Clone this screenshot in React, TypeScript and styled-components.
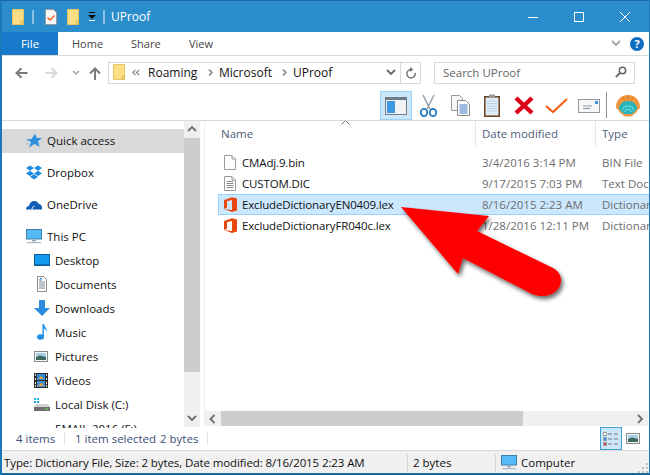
import React from "react";
import styled, { createGlobalStyle } from "styled-components";

const Global = createGlobalStyle`
  html, body { margin: 0; padding: 0; background: #fff; }
  #root { width: 650px; height: 475px; overflow: hidden; }
  * { box-sizing: border-box; }
`;

const Window = styled.div`
  position: relative;
  width: 650px;
  height: 475px;
  display: flex;
  flex-direction: column;
  background: #fff;
  border-left: 2px solid #1c79b8;
  border-right: 1px solid #1c79b8;
  border-top: 1px solid #17699f;
  border-bottom: 2px solid #17699f;
  font-family: "Open Sans", "Noto Sans", sans-serif;
  font-size: 11.5px;
  color: #111;
  overflow: hidden;
`;

const TitleBar = styled.div`
  height: 31px;
  flex: none;
  background: #2b8dcb;
  display: flex;
  align-items: center;
  color: #fff;
  padding-left: 10px;
`;
const QuickIcons = styled.div`
  display: flex;
  align-items: center;
  width: 99px;
`;
const TitleSep = styled.span<{ $l: number; $r: number }>`
  width: 2px;
  height: 14px;
  background: #8cc0e2;
  margin: 0 ${(p) => p.$r}px 0 ${(p) => p.$l}px;
`;
const TitleText = styled.span`
  font-size: 12px;
  flex: 1;
`;
const WindowControls = styled.div`
  display: flex;
  align-items: center;
  gap: 36px;
  margin-right: 19px;
`;

const Tabs = styled.div`
  height: 24px;
  flex: none;
  display: flex;
  align-items: stretch;
  border-bottom: 1px solid #dadada;
`;
const FileTab = styled.div`
  width: 56px;
  background: #1979ca;
  color: #fff;
  display: flex;
  align-items: center;
  justify-content: center;
  font-size: 11.5px;
  flex: none;
`;
const Tab = styled.div<{ $w: number; $pl: number }>`
  width: ${(p) => p.$w}px;
  padding-left: ${(p) => p.$pl}px;
  color: #444;
  display: flex;
  align-items: center;
  font-size: 11px;
  flex: none;
`;
const RibbonTools = styled.div`
  margin-left: auto;
  margin-right: 5px;
  display: flex;
  align-items: center;
  gap: 9px;
`;

const AddressRow = styled.div`
  height: 29px;
  flex: none;
  display: flex;
  align-items: flex-start;
  padding-top: 6px;
`;
const NavButtons = styled.div`
  width: 106px;
  height: 22px;
  display: flex;
  align-items: center;
  padding-left: 13px;
  flex: none;
`;
const NavSlot = styled.span<{ $w: number }>`
  width: ${(p) => p.$w}px;
  display: flex;
  align-items: center;
  flex: none;
`;
const AddressBox = styled.div`
  width: 313px;
  height: 22px;
  flex: none;
  border: 1px solid #d9d9d9;
  display: flex;
  align-items: center;
  padding: 0 0 2px 4px;
  font-size: 12px;
`;
const Crumb = styled.span<{ $w: number }>`
  width: ${(p) => p.$w}px;
  flex: none;
`;
const CrumbArrow = styled.span<{ $w: number }>`
  width: ${(p) => p.$w}px;
  flex: none;
  display: flex;
  justify-content: center;
`;
const AddressEnd = styled.div`
  margin-left: auto;
  height: 20px;
  margin-bottom: -2px;
  display: flex;
  align-items: center;
`;
const RefreshCell = styled.div`
  width: 20px;
  height: 100%;
  margin-left: 4px;
  border-left: 1px solid #d9d9d9;
  display: flex;
  align-items: center;
  justify-content: center;
`;
const SearchBox = styled.div`
  width: 201px;
  height: 22px;
  margin-left: 13px;
  flex: none;
  border: 1px solid #d9d9d9;
  display: flex;
  align-items: center;
  justify-content: space-between;
  padding: 0 7px 2px 8px;
  color: #666;
  font-size: 11.5px;
`;

const CommandRow = styled.div`
  height: 36px;
  flex: none;
  display: flex;
  align-items: flex-end;
  padding-left: 378px;
  border-bottom: 1px solid #d9d9d9;
`;
const ToggleButton = styled.div`
  width: 32px;
  height: 29px;
  background: #cce6fa;
  border: 1px solid #99d1f7;
  display: flex;
  align-items: center;
  justify-content: center;
  flex: none;
`;
const CommandIcon = styled.div<{ $w: number; $ml: number }>`
  width: ${(p) => p.$w}px;
  margin-left: ${(p) => p.$ml}px;
  height: 29px;
  display: flex;
  align-items: center;
  justify-content: center;
  flex: none;
`;
const CommandSep = styled.span`
  width: 1px;
  height: 26px;
  background: #8f8f8f;
  margin: 0 9px 2px 6px;
  flex: none;
`;

const Body = styled.div`
  height: 307px;
  flex: none;
  display: flex;
  overflow: hidden;
`;
const NavPane = styled.div`
  width: 182px;
  flex: none;
  padding-top: 8px;
  overflow: hidden;
`;
const NavGroup = styled.div`
  margin-bottom: 8px;
`;
const NavRow = styled.div<{ $active?: boolean; $indent?: boolean }>`
  height: 24px;
  display: flex;
  align-items: center;
  background: ${(p) => (p.$active ? "#d9d9d9" : "transparent")};
  padding: 0 0 2px ${(p) => (p.$indent ? "32px" : "24px")};
  font-size: 11.5px;
  color: #111;
`;
const NavIcon = styled.span<{ $w: number }>`
  width: ${(p) => p.$w}px;
  flex: none;
  display: flex;
  align-items: center;
`;
const VScroll = styled.div`
  width: 16px;
  flex: none;
  background: #f0f0f0;
  display: flex;
  flex-direction: column;
  align-items: stretch;
  height: 306px;
`;
const ScrollArrow = styled.div<{ $w?: number }>`
  flex: none;
  display: flex;
  align-items: center;
  justify-content: center;
  height: ${(p) => (p.$w ? "auto" : "17px")};
  width: ${(p) => (p.$w ? p.$w + "px" : "auto")};
`;
const VThumb = styled.div`
  height: 234px;
  background: #cdcdcd;
  flex: none;
`;
const Grow = styled.div`
  flex: 1;
`;
const FileArea = styled.div`
  flex: 1;
  min-width: 0;
  display: flex;
  flex-direction: column;
  margin-left: 4px;
  border-left: 1px solid #f0f0f0;
  height: 306px;
  position: relative;
`;
const HeaderRow = styled.div`
  height: 25px;
  flex: none;
  display: flex;
  color: #4c607a;
  font-size: 11.5px;
  margin-bottom: 6px;
`;
const HeaderCell = styled.div<{ $w: number; $pl: number; $sep?: boolean }>`
  width: ${(p) => p.$w}px;
  flex: none;
  padding-left: ${(p) => p.$pl}px;
  padding-top: 5px;
  border-right: ${(p) => (p.$sep ? "1px solid #e5e5e5" : "none")};
  white-space: nowrap;
`;
const SortCaret = styled.svg`
  position: absolute;
  left: 136px;
  top: -1px;
`;
const FileList = styled.div`
  flex: 1;
  padding-left: 13px;
  overflow: hidden;
`;
const FileRow = styled.div<{ $selected?: boolean }>`
  height: 21px;
  display: flex;
  align-items: center;
  background: ${(p) => (p.$selected ? "#cce8ff" : "transparent")};
  border: 1px solid ${(p) => (p.$selected ? "#99d1ff" : "transparent")};
  border-right: none;
  padding-left: 5px;
  white-space: nowrap;
  font-size: 11.5px;
`;
const FileIcon = styled.span`
  width: 18px;
  flex: none;
  display: flex;
  align-items: center;
`;
const FileName = styled.span`
  width: 240px;
  flex: none;
  color: #111;
  letter-spacing: -0.15px;
`;
const FileDate = styled.span`
  width: 120px;
  flex: none;
  color: #6d6d6d;
`;
const FileType = styled.span`
  color: #6d6d6d;
`;
const HScroll = styled.div`
  height: 15px;
  flex: none;
  background: #f0f0f0;
  display: flex;
  margin-bottom: 1px;
  margin-right: 1px;
`;
const HThumb = styled.div`
  width: 302px;
  background: #cdcdcd;
  flex: none;
`;

const StatusTop = styled.div`
  height: 23px;
  flex: none;
  display: flex;
  align-items: center;
  color: #3c4f78;
  font-size: 11.5px;
  border-bottom: 1px solid #d9d9d9;
  padding: 0 0 1px 14px;
`;
const StatusItem = styled.span<{ $w: number }>`
  width: ${(p) => p.$w}px;
  flex: none;
  white-space: nowrap;
`;
const StatusDivider = styled.span<{ $mr: number }>`
  width: 1px;
  height: 13px;
  background: #e5e5e5;
  margin-right: ${(p) => p.$mr}px;
  flex: none;
`;
const ViewButtons = styled.div`
  margin-left: auto;
  margin-right: 9px;
  display: flex;
  align-items: center;
  gap: 4px;
`;
const ViewButton = styled.div<{ $active?: boolean }>`
  width: ${(p) => (p.$active ? "22px" : "14px")};
  height: 23px;
  display: flex;
  align-items: center;
  justify-content: center;
  background: ${(p) => (p.$active ? "#cce6fa" : "transparent")};
  border: ${(p) => (p.$active ? "1px solid #3fa0d8" : "none")};
`;
const StatusBottom = styled.div`
  flex: 1;
  background: #f0f0f0;
  display: flex;
  align-items: center;
  position: relative;
  font-size: 11.5px;
  color: #111;
  padding-left: 2px;
`;
const StatusCell = styled.div<{ $w: number; $pl: number; $sep?: boolean; $tight?: boolean }>`
  width: ${(p) => p.$w}px;
  flex: none;
  height: 17px;
  display: flex;
  align-items: center;
  gap: 4px;
  padding-left: ${(p) => p.$pl}px;
  border-right: ${(p) => (p.$sep ? "1px solid #d4d4d4" : "none")};
  letter-spacing: ${(p) => (p.$tight ? "-0.1px" : "0")};
  white-space: nowrap;
`;
const Grip = styled.svg`
  position: absolute;
  right: 0;
  bottom: 0;
`;
const ArrowOverlay = styled.svg`
  position: absolute;
  left: -2px;
  top: -1px;
  pointer-events: none;
`;

const Folder = ({ w = 12, h = 16 }: { w?: number; h?: number }) => (
  <svg width={w} height={h} viewBox="0 0 12 16">
    <path d="M.5.5h11v15H.5z" fill="#fbde85" stroke="#e9c561" />
    <path d="M9 12h2.5v3.5H9z" fill="#f3cf6c" stroke="#d9b24c" strokeWidth=".6" />
  </svg>
);

const Office = () => (
  <svg width="13" height="15" viewBox="0 0 13 15">
    <path d="M0 3 8 .2 13 1.5v12L8 15 0 12l8 1V3L3 4.2v6.6L0 12z" fill="#e8470f" />
  </svg>
);

const Monitor = ({ w = 16, h = 15 }: { w?: number; h?: number }) => (
  <svg width={w} height={h} viewBox="0 0 16 15">
    <rect x=".5" y=".5" width="15" height="9.5" fill="#55bbf7" stroke="#3c7fa8" />
    <path d="M6 11h4v1.4H6z" fill="#8fa6b5" />
    <path d="M1 13h14v1.2H1z" fill="#a9bac6" />
  </svg>
);

const Landscape = () => (
  <svg width="14" height="11" viewBox="0 0 14 11">
    <rect x=".5" y=".5" width="13" height="10" fill="#f4f7f9" stroke="#8a8a8a" />
    <rect x="2" y="2" width="10" height="4" fill="#a8cfe6" />
    <path d="M2 6l4-1.5 6 1.5v3H2z" fill="#3f6b5e" />
  </svg>
);

const Chevron = ({ dir, color = "#6d6d6d" }: { dir: "up" | "down" | "left" | "right"; color?: string }) => {
  const d = { up: "M1 6l4-4 4 4", down: "M1 2l4 4 4-4", left: "M6.5 1l-4 4 4 4", right: "M3 1l4 4-4 4" }[dir];
  return (
    <svg width="10" height="10" viewBox="0 0 10 10" style={{ display: "block" }}>
      <path d={d} fill="none" stroke={color} strokeWidth="1.8" />
    </svg>
  );
};

const NavArrow = ({ flip, color }: { flip?: boolean; color: string }) => (
  <svg width="13" height="12" viewBox="0 0 13 12" style={flip ? { transform: "scaleX(-1)" } : undefined}>
    <path d="M12.5 6H2M6.5 1.2 1.5 6l5 4.8" fill="none" stroke={color} strokeWidth="2" />
  </svg>
);

const navTop = [
  {
    label: "Dropbox",
    icon: (
      <svg width="16" height="15" viewBox="0 0 16 15">
        <path d="M4 .5 8 3 4 5.7 0 3zM12 .5 16 3l-4 2.700L8 3zM4 5.700 8 8.400 4 11 0 8.400zM12 5.700l4 2.700L12 11 8 8.400zM4 11.800 8 9.200l4 2.600L8 14.500z" fill="#1f8be0" />
      </svg>
    ),
  },
  {
    label: "OneDrive",
    icon: (
      <svg width="16" height="11" viewBox="0 0 16 11">
        <path d="M0 10.500C0 8 1.500 7 3 7c.5-3 2.500-5 5-5s4 1 4.800 3C14.800 5 16 7 16 8.500v2z" fill="#0f5db5" />
        <path d="M6 10.500c0-2 1-3 2.600-3.300" fill="none" stroke="#fff" strokeWidth="1" />
      </svg>
    ),
  },
];

const pcItems: { label: string; icon: React.ReactNode }[] = [
  {
    label: "Desktop",
    icon: (
      <svg width="16" height="12" viewBox="0 0 16 12">
        <rect x=".5" y=".5" width="15" height="11" fill="#149bee" stroke="#0d5f96" />
        <path d="M1 10h14v1H1z" fill="#0b6fb4" />
      </svg>
    ),
  },
  {
    label: "Documents",
    icon: (
      <svg width="16" height="16" viewBox="0 0 16 16">
        <path d="M3.500.5h6l3 3v12h-9z" fill="#fff" stroke="#8d8d8d" />
        <path d="M5 6h6M5 8h6M5 10h6M5 12h6" stroke="#7d8c96" />
        <path d="M6 2.500h2M5 4h3" stroke="#2c8ee0" />
      </svg>
    ),
  },
  {
    label: "Downloads",
    icon: (
      <svg width="16" height="16" viewBox="0 0 16 16">
        <path d="M5 0h6v8h5l-8 8-8-8h5z" fill="#2c8ce0" />
      </svg>
    ),
  },
  {
    label: "Music",
    icon: (
      <svg width="16" height="16" viewBox="0 0 16 16">
        <ellipse cx="6.500" cy="13" rx="3.500" ry="2.700" fill="#1f8ee6" />
        <path d="M8.500 13V0h1.400c.5 3 3.600 4 2.800 8-.5-2-2-3.200-2.800-3.400V13z" fill="#1f8ee6" />
      </svg>
    ),
  },
  { label: "Pictures", icon: <Landscape /> },
  {
    label: "Videos",
    icon: (
      <svg width="14" height="15" viewBox="0 0 14 15">
        <rect width="14" height="15" fill="#2d2d2d" />
        <path d="M3 1h8v6H3z" fill="#2c8ce0" />
        <path d="M3 8h8v6H3z" fill="#4a90d0" />
        <path d="M4 6l3-3 3 3zM4 13l3-3 3 3z" fill="#e3a13a" />
        <path d="M1 1h1v2H1zM1 5h1v2H1zM1 9h1v2H1zM1 12h1v2H1zM12 1h1v2h-1zM12 5h1v2h-1zM12 9h1v2h-1zM12 12h1v2h-1z" fill="#ddd" />
      </svg>
    ),
  },
  {
    label: "Local Disk (C:)",
    icon: (
      <svg width="16" height="14" viewBox="0 0 16 14">
        <path d="M0 1h2v2H0zM3 1h2v2H3zM0 4h2v2H0zM3 4h2v2H3z" fill="#18b4ee" />
        <path d="M2 7h12l2 3v4H0v-4z" fill="#d2d2d2" />
        <path d="M0 10h16v4H0z" fill="#6f6f6f" />
        <path d="M11 11.500h3v1.200h-3z" fill="#6fd34f" />
      </svg>
    ),
  },
  {
    label: "EMAIL-2016 (F:)",
    icon: (
      <svg width="16" height="14" viewBox="0 0 16 14">
        <path d="M0 8h16v6H0z" fill="#8a8a8a" />
      </svg>
    ),
  },
];

const files = [
  { name: "CMAdj.9.bin", date: "3/4/2016 3:14 PM", type: "BIN File", kind: "blank" },
  { name: "CUSTOM.DIC", date: "9/17/2015 7:03 PM", type: "Text Document", kind: "text" },
  { name: "ExcludeDictionaryEN0409.lex", date: "8/16/2015 2:23 AM", type: "Dictionary File", kind: "office", selected: true },
  { name: "ExcludeDictionaryFR040c.lex", date: "1/28/2016 12:11 PM", type: "Dictionary File", kind: "office" },
];

const FileGlyph = ({ kind }: { kind: string }) => {
  if (kind === "office") return <Office />;
  return (
    <svg width="12" height="15" viewBox="0 0 12 15">
      <path d="M.5.500h7.500l3.500 3.500v10.500H.5z" fill="#fff" stroke="#9b9b9b" />
      <path d="M8 .5V4h3.500" fill="#eee" stroke="#9b9b9b" />
      {kind === "text" && <path d="M2.500 5.500h7M2.500 7.500h7M2.500 9.500h7M2.500 11.500h7" stroke="#8a8a8a" />}
    </svg>
  );
};

export default function App() {
  return (
    <Window>
      <Global />
      <TitleBar>
        <QuickIcons>
          <Folder />
          <TitleSep $l={8} $r={11} />
          <svg width="12" height="16" viewBox="0 0 12 16">
            <path d="M.5.500h8l3 3v12H.5z" fill="#f7f7f7" stroke="#9a9a9a" />
            <path d="M2.500 8.500l2.500 2.500 4.500-4.500" fill="none" stroke="#e8591a" strokeWidth="1.400" />
          </svg>
          <span style={{ width: 10 }} />
          <Folder />
          <svg width="9" height="9" viewBox="0 0 9 9" style={{ marginLeft: 9 }}>
            <path d="M1 0h6v1H1zM0 3h8L4 7z" fill="#111" />
            <path d="M1 8h6v1H1z" fill="#fff" />
          </svg>
          <TitleSep $l={6} $r={0} />
        </QuickIcons>
        <TitleText>UProof</TitleText>
        <WindowControls>
          <svg width="10" height="10" viewBox="0 0 10 10">
            <path d="M0 5.500h10" stroke="#fff" />
          </svg>
          <svg width="10" height="10" viewBox="0 0 10 10">
            <rect x=".5" y=".5" width="9" height="9" fill="none" stroke="#fff" />
          </svg>
          <svg width="10" height="10" viewBox="0 0 10 10">
            <path d="M0 0l10 10M10 0 0 10" stroke="#fff" />
          </svg>
        </WindowControls>
      </TitleBar>

      <Tabs>
        <FileTab>File</FileTab>
        <Tab $w={59} $pl={14}>Home</Tab>
        <Tab $w={58} $pl={14}>Share</Tab>
        <Tab $w={60} $pl={14}>View</Tab>
        <RibbonTools>
          <Chevron dir="down" color="#a5a5a5" />
          <svg width="14" height="14" viewBox="0 0 14 14">
            <circle cx="7" cy="7" r="7" fill="#0f6cc2" />
            <text x="7" y="11" textAnchor="middle" fontSize="11" fontWeight="700" fill="#fff" fontFamily="Open Sans">?</text>
          </svg>
        </RibbonTools>
      </Tabs>

      <AddressRow>
        <NavButtons>
          <NavSlot $w={30}><NavArrow color="#7b7b7b" /></NavSlot>
          <NavSlot $w={27}><NavArrow flip color="#d7d7d7" /></NavSlot>
          <NavSlot $w={17}>
            <svg width="8" height="6" viewBox="0 0 8 6"><path d="M1 1l3 3 3-3" fill="none" stroke="#a5a5a5" strokeWidth="1.500" /></svg>
          </NavSlot>
          <NavSlot $w={13}>
            <svg width="12" height="13" viewBox="0 0 12 13"><path d="M6 13V2M1 6.500 6 1.500l5 5" fill="none" stroke="#7b7b7b" strokeWidth="2" /></svg>
          </NavSlot>
        </NavButtons>
        <AddressBox>
          <NavSlot $w={19}><Folder /></NavSlot>
          <NavSlot $w={16}>
            <svg width="8" height="7" viewBox="0 0 8 7"><path d="M3.500.8.800 3.500l2.700 2.700M7.200.8 4.500 3.500l2.700 2.700" fill="none" stroke="#808080" strokeWidth="1.100" /></svg>
          </NavSlot>
          <Crumb $w={54}>Roaming</Crumb>
          <CrumbArrow $w={17}><svg width="5" height="7" viewBox="0 0 5 7"><path d="M1 .5 4 3.500 1 6.500" fill="none" stroke="#777" strokeWidth="1.300" /></svg></CrumbArrow>
          <Crumb $w={57}>Microsoft</Crumb>
          <CrumbArrow $w={17}><svg width="5" height="7" viewBox="0 0 5 7"><path d="M1 .5 4 3.500 1 6.500" fill="none" stroke="#777" strokeWidth="1.300" /></svg></CrumbArrow>
          <Crumb $w={50}>UProof</Crumb>
          <AddressEnd>
            <Chevron dir="down" color="#666" />
            <RefreshCell>
              <svg width="11" height="12" viewBox="0 0 11 12">
                <path d="M6.500 2.500a4.200 4.200 0 1 0 3.700 3.500" fill="none" stroke="#777" strokeWidth="1.500" />
                <path d="M5 0l3.500 2.500L5 5z" fill="#777" />
              </svg>
            </RefreshCell>
          </AddressEnd>
        </AddressBox>
        <SearchBox>
          Search UProof
          <svg width="12" height="12" viewBox="0 0 12 12">
            <circle cx="7.500" cy="4.500" r="3.200" fill="none" stroke="#666" strokeWidth="1.500" />
            <path d="M5 7 .8 11.200" stroke="#666" strokeWidth="1.800" />
          </svg>
        </SearchBox>
      </AddressRow>

      <CommandRow>
        <ToggleButton>
          <svg width="22" height="18" viewBox="0 0 22 18">
            <rect x=".5" y=".5" width="21" height="17" fill="#f2f2f2" stroke="#6e7c88" />
            <rect x="1" y="1" width="20" height="2" fill="#6e7c88" />
            <rect x="2" y="4" width="8" height="12" fill="#3f97e0" />
          </svg>
        </ToggleButton>
        <CommandIcon $w={17} $ml={8}>
          <svg width="17" height="23" viewBox="0 0 17 23">
            <path d="M3 1l7 14M14 1 7 15" stroke="#9aa4ac" strokeWidth="1.600" />
            <ellipse cx="4" cy="18.500" rx="3.200" ry="3.600" fill="none" stroke="#1f7cc4" strokeWidth="1.800" />
            <ellipse cx="13" cy="18.500" rx="3.200" ry="3.600" fill="none" stroke="#1f7cc4" strokeWidth="1.800" />
          </svg>
        </CommandIcon>
        <CommandIcon $w={19} $ml={14}>
          <svg width="19" height="21" viewBox="0 0 19 21">
            <path d="M.5.500h8l3 3v12H.5z" fill="#f7f7f7" stroke="#9a9a9a" />
            <path d="M6.500 5.500h8l4 4v11h-12z" fill="#fff" stroke="#8a8a8a" />
            <path d="M8.500 10h8M8.500 12h8M8.500 14h8M8.500 16h8M8.500 18h8" stroke="#3a78c8" />
          </svg>
        </CommandIcon>
        <CommandIcon $w={16} $ml={14}>
          <svg width="16" height="23" viewBox="0 0 16 23">
            <rect x=".8" y="2.800" width="14.400" height="19.400" fill="#e2eef7" stroke="#6b4a2c" strokeWidth="1.600" />
            <path d="M5 .5h6v3.500H5z" fill="#9a9a9a" />
            <path d="M3 7h10M3 9.500h10M3 12h10M3 14.500h10M3 17h10" stroke="#b9d2e6" />
          </svg>
        </CommandIcon>
        <CommandIcon $w={20} $ml={14}>
          <svg width="20" height="19" viewBox="0 0 20 19">
            <path d="M2 2l16 15M18 2 2 17" stroke="#dc0014" strokeWidth="4.400" />
          </svg>
        </CommandIcon>
        <CommandIcon $w={23} $ml={11}>
          <svg width="23" height="16" viewBox="0 0 23 16">
            <path d="M1 8l7 6L22 1" fill="none" stroke="#f0601a" strokeWidth="2.200" />
          </svg>
        </CommandIcon>
        <CommandIcon $w={23} $ml={9}>
          <svg width="22" height="14" viewBox="0 0 22 14">
            <rect x=".5" y=".5" width="21" height="13" fill="#f7f7f7" stroke="#8f9aa4" />
            <rect x="17" y="2" width="3" height="3" fill="#3b94e6" />
            <path d="M5 7h9M5 9.500h7" stroke="#8f9aa4" />
          </svg>
        </CommandIcon>
        <CommandSep />
        <CommandIcon $w={24} $ml={0}>
          <svg width="24" height="22" viewBox="0 0 24 22">
            <path d="M12 0C5 0 0 5 0 12c0 2 2 2 3 4 1 3 3 2 4 4 1 2 9 2 10 0 1-2 3-1 4-4 1-2 3-2 3-4C24 5 19 0 12 0z" fill="#f0963c" />
            <path d="M12 6C7 6 3 9 3 14c2 2 4 4 5 5h8c1-1 3-3 5-5 0-5-4-8-9-8z" fill="#27b4bd" />
            <path d="M6.500 15.500c0-6 11-6 11 0M9 17c0-3.500 6-3.500 6 0" fill="none" stroke="#5fd6cf" strokeWidth="1.300" />
            <path d="M7 1.500 8.500 6M12 0v5.500M17 1.500 15.500 6" stroke="#d9772a" />
          </svg>
        </CommandIcon>
      </CommandRow>

      <Body>
        <NavPane>
          <NavGroup>
            <NavRow $active>
              <NavIcon $w={21}>
                <svg width="16" height="15" viewBox="0 0 16 15">
                  <path d="M9 .5l1.700 4.500H16l-4 3.300 1.500 5.500L8.500 11 3 14.500l2-5.500L.5 6l5 .2z" fill="#2c8fdf" />
                  <path d="M0 8h3M0 11h3" stroke="#8cc4ee" />
                </svg>
              </NavIcon>
              Quick access
            </NavRow>
          </NavGroup>
          {navTop.map((n) => (
            <NavGroup key={n.label}>
              <NavRow>
                <NavIcon $w={21}>{n.icon}</NavIcon>
                {n.label}
              </NavRow>
            </NavGroup>
          ))}
          <NavRow>
            <NavIcon $w={21}><Monitor /></NavIcon>
            This PC
          </NavRow>
          {pcItems.map((n) => (
            <NavRow $indent key={n.label}>
              <NavIcon $w={21}>{n.icon}</NavIcon>
              {n.label}
            </NavRow>
          ))}
        </NavPane>
        <VScroll>
          <ScrollArrow><Chevron dir="up" /></ScrollArrow>
          <VThumb />
          <Grow />
          <ScrollArrow><Chevron dir="down" /></ScrollArrow>
        </VScroll>
        <FileArea>
          <SortCaret width="9" height="5" viewBox="0 0 9 5">
            <path d="M.5 4.500 4.500.5l4 4" fill="none" stroke="#6d6d6d" />
          </SortCaret>
          <HeaderRow>
            <HeaderCell $w={271} $pl={16} $sep>Name</HeaderCell>
            <HeaderCell $w={120} $pl={6} $sep>Date modified</HeaderCell>
            <HeaderCell $w={60} $pl={6}>Type</HeaderCell>
          </HeaderRow>
          <FileList>
            {files.map((f) => (
              <FileRow key={f.name} $selected={f.selected}>
                <FileIcon><FileGlyph kind={f.kind} /></FileIcon>
                <FileName>{f.name}</FileName>
                <FileDate>{f.date}</FileDate>
                <FileType>{f.type}</FileType>
              </FileRow>
            ))}
          </FileList>
          <HScroll>
            <ScrollArrow $w={16}><Chevron dir="left" /></ScrollArrow>
            <HThumb />
            <Grow />
            <ScrollArrow $w={17}><Chevron dir="right" /></ScrollArrow>
          </HScroll>
        </FileArea>
      </Body>

      <StatusTop>
        <StatusItem $w={48}>4 items</StatusItem>
        <StatusDivider $mr={10} />
        <StatusItem $w={85}>1 item selected</StatusItem>
        <StatusItem $w={47}>2 bytes</StatusItem>
        <StatusDivider $mr={0} />
        <ViewButtons>
          <ViewButton $active>
            <svg width="16" height="14" viewBox="0 0 16 14">
              <path d="M.5.500h3v3h-3zM.5 5.500h3v3h-3zM.5 10.500h3v3h-3z" fill="#fff" stroke="#777" strokeWidth=".7" />
              <path d="M1 6h2v2H1z" fill="#3b94e6" />
              <path d="M1 11h2v2H1z" fill="#d44" />
              <path d="M5 2h4M11 2h4M5 7h4M11 7h4M5 12h4M11 12h4" stroke="#777" />
            </svg>
          </ViewButton>
          <ViewButton><Landscape /></ViewButton>
        </ViewButtons>
      </StatusTop>
      <StatusBottom>
        <StatusCell $w={404} $pl={0} $sep $tight>Type: Dictionary File, Size: 2 bytes, Date modified: 8/16/2015 2:23 AM</StatusCell>
        <StatusCell $w={88} $pl={5} $sep>2 bytes</StatusCell>
        <StatusCell $w={120} $pl={5}><Monitor />Computer</StatusCell>
        <Grip width="11" height="11" viewBox="0 0 11 11">
          <path d="M8 1h2v2H8zM4 5h2v2H4zM8 5h2v2H8zM0 9h2v2H0zM4 9h2v2H4zM8 9h2v2H8z" fill="#c2c2c2" />
        </Grip>
      </StatusBottom>

      <ArrowOverlay width="650" height="475" viewBox="0 0 650 475">
        <defs>
          <filter id="arrowShadow" x="-20%" y="-20%" width="140%" height="140%">
            <feDropShadow dx="2" dy="3" stdDeviation="2" floodColor="#000" floodOpacity=".6" />
          </filter>
        </defs>
        <path
          d="M401 207 489 216 477 231 553 268C562 273 563 282 558 289 552 296 543 298 532 294L463 258 458 274Z"
          fill="#ff0000"
          filter="url(#arrowShadow)"
        />
      </ArrowOverlay>
    </Window>
  );
}
